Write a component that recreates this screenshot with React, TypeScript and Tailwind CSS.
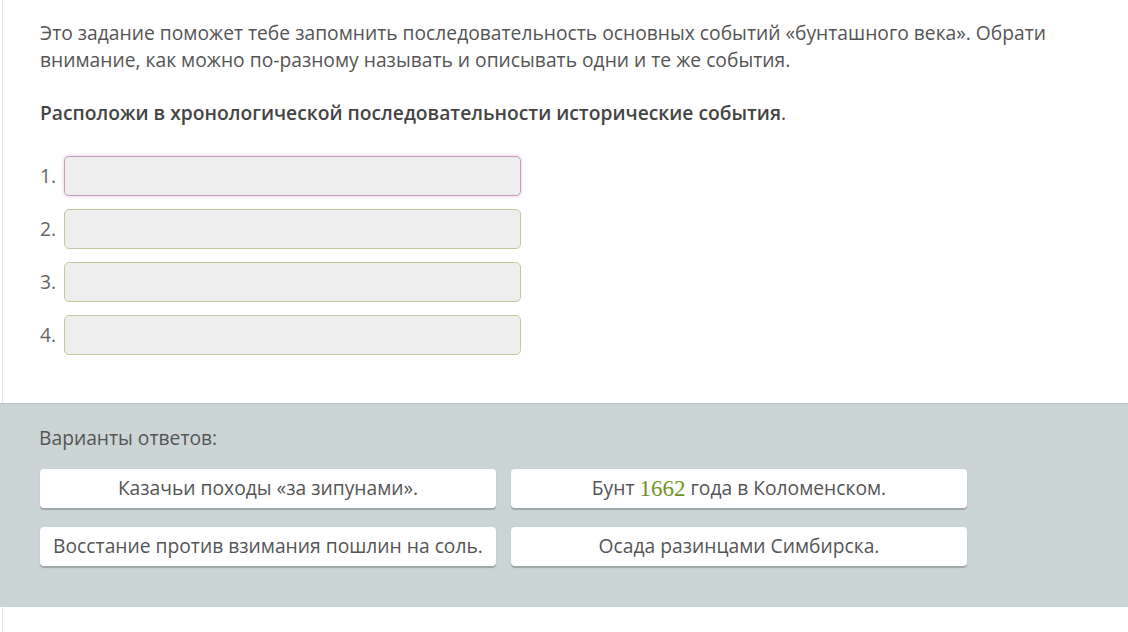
import React from "react";

const font = { fontFamily: '"Open Sans", "Noto Sans", sans-serif' };

function Slot({ n, first }: { n: number; first?: boolean }) {
  return (
    <div className="flex items-center h-[40px]">
      <div className="w-[24px] text-[19.25px] text-[#666]">{n}.</div>
      <div
        className={
          first
            ? "w-[457px] h-[40px] rounded-[5px] bg-[#eeeeee] border border-[#c79bbd] shadow-[0_0_3px_1px_rgba(220,170,210,0.45)]"
            : "w-[457px] h-[40px] rounded-[5px] bg-[#eeeeee] border border-[#c4c89e]"
        }
      />
    </div>
  );
}

function Btn({ children }: { children: React.ReactNode }) {
  return (
    <div className="w-[456px] h-[39px] rounded-[4px] bg-white flex items-center justify-center text-[19.25px] text-[#555] shadow-[0_2px_1px_rgba(120,130,130,0.55)]">
      {children}
    </div>
  );
}

export default function App() {
  return (
    <div className="w-[1128px] h-[632px] bg-white overflow-hidden" style={font}>
      <div className="ml-[2px] border-l border-[#e6e6e6] pl-[37px] pt-[19px] h-[403px]">
        <p className="text-[19.25px] leading-[27px] text-[#555] w-[1080px]">
          Это задание поможет тебе запомнить последовательность основных событий «бунташного века». Обрати
          <br />
          внимание, как можно по-разному называть и описывать одни и те же события.
        </p>
        <p className="mt-[26px] text-[19.25px] leading-[27px] text-[#444]">
          <span className="font-semibold">Расположи в хронологической последовательности исторические события</span>.
        </p>
        <div className="mt-[30px] flex flex-col gap-[13px]">
          <Slot n={1} first />
          <Slot n={2} />
          <Slot n={3} />
          <Slot n={4} />
        </div>
      </div>
      <div className="h-[204px] bg-[#cbd5d6] border-t border-[#b9c2c2] pl-[40px] pt-[20px]">
        <div className="-ml-[1px] text-[19.25px] leading-[27px] text-[#555]">Варианты ответов:</div>
        <div className="mt-[18px] grid grid-cols-[456px_456px] gap-x-[15px] gap-y-[19px]">
          <Btn>Казачьи походы «за зипунами».</Btn>
          <Btn>
            Бунт&nbsp;
            <span
              className="text-[23px] leading-none text-[#6f9424]"
              style={{ fontFamily: '"Liberation Serif", "DejaVu Serif", serif' }}
            >
              1662
            </span>
            &nbsp;года в Коломенском.
          </Btn>
          <Btn>Восстание против взимания пошлин на соль.</Btn>
          <Btn>Осада разинцами Симбирска.</Btn>
        </div>
      </div>
      <div className="ml-[2px] border-l border-[#e6e6e6] h-[25px]" />
    </div>
  );
}
